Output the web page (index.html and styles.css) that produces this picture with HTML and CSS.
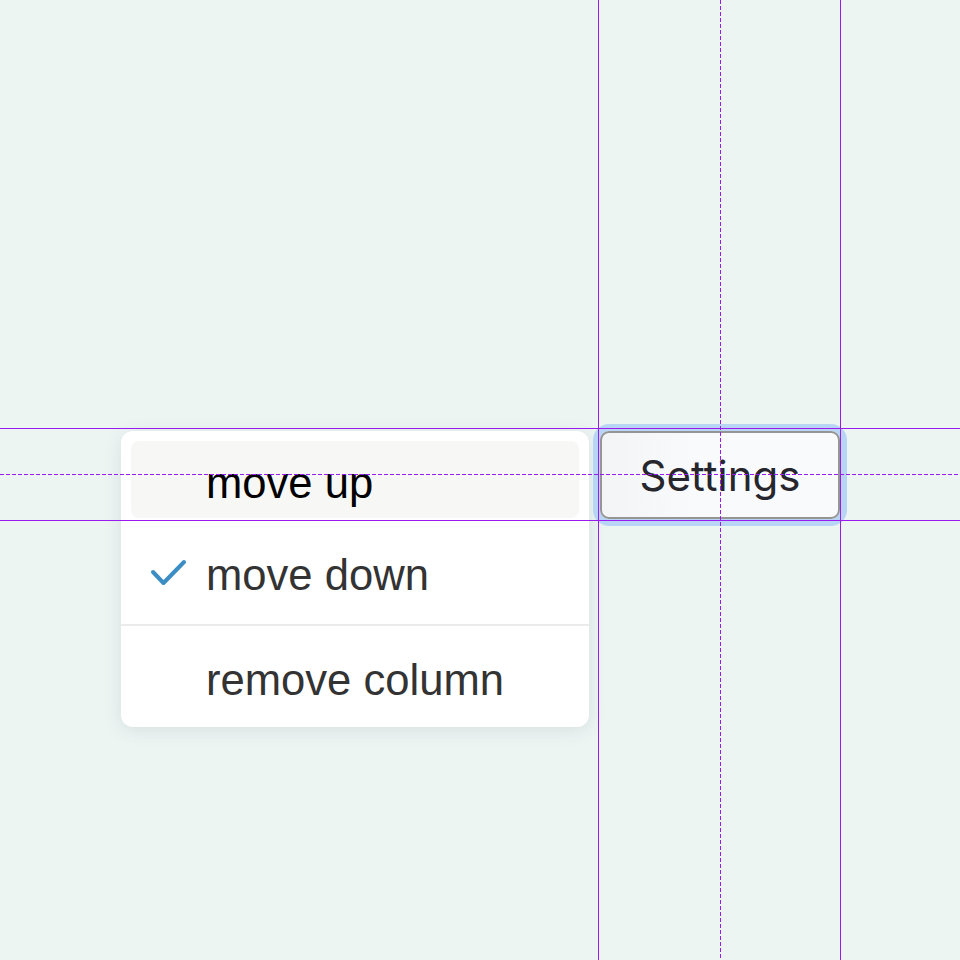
FILE: index.html
```html
<!DOCTYPE html>
<html>
<head>
<meta charset="utf-8">
<link rel="stylesheet" href="styles.css">
</head>
<body>
<div class="stage">
  <div class="menu">
    <div class="item item-hover"><span class="label">move up</span></div>
    <div class="item item-checked">
      <svg class="check" width="40" height="30" viewBox="0 0 40 30"><polyline points="3,13 13.5,24 34,3" fill="none" stroke="#3b8dc4" stroke-width="4" stroke-linecap="round" stroke-linejoin="round"/></svg>
      <span class="label">move down</span>
    </div>
    <div class="sep"></div>
    <div class="item item-last"><span class="label">remove column</span></div>
  </div>
  <button class="btn">Settings</button>
</div>
<div class="guides">
  <div class="h solid" style="top:428px"></div>
  <div class="h dashed" style="top:474px"></div>
  <div class="h solid" style="top:520px"></div>
  <div class="v solid" style="left:598px"></div>
  <div class="v dashed" style="left:720px"></div>
  <div class="v solid" style="left:840px"></div>
</div>
</body>
</html>
```
FILE: styles.css
```css
html, body {
  margin: 0;
  padding: 0;
  background: #edf5f3;
  width: 960px;
  height: 960px;
  overflow: hidden;
}
.stage {
  display: flex;
  align-items: flex-start;
  gap: 11px;
  padding: 431px 0 0 121px;
}
.menu {
  width: 468px;
  background: #ffffff;
  border-radius: 12px;
  box-shadow: 0 3px 18px rgba(40, 70, 70, 0.12);
  padding: 10px 0;
  box-sizing: border-box;
  font-family: "Liberation Sans", Arial, sans-serif;
  font-size: 43.6px;
  line-height: 1;
  color: #333333;
}
.item {
  position: relative;
  padding-left: 85px;
}
.item-hover {
  margin: 0 10px;
  padding-left: 75px;
  padding-top: 21px;
  height: 77px;
  box-sizing: border-box;
  background: #f7f7f5;
  border-radius: 8px;
  color: #000000;
}
.item-checked {
  padding-top: 36px;
  height: 106px;
  box-sizing: border-box;
}
.check {
  position: absolute;
  left: 29px;
  top: 41px;
}
.sep {
  height: 2px;
  background: #ebebeb;
}
.item-last {
  padding-top: 33px;
  height: 91px;
  box-sizing: border-box;
}
.label {
  display: block;
  white-space: nowrap;
}
.btn {
  width: 240px;
  height: 88px;
  box-sizing: border-box;
  border: 2px solid #959595;
  border-radius: 9px;
  background: linear-gradient(90deg, #f2f4f6, #f9fafc 40%, #f9fafc);
  box-shadow: 0 0 0 7px #b9d5f5;
  font-family: Inter, "Liberation Sans", sans-serif;
  font-size: 42px;
  color: #26262c;
  padding: 0;
  margin: 0;
}
.guides {
  position: absolute;
  left: 0;
  top: 0;
  width: 960px;
  height: 960px;
  pointer-events: none;
}
.h {
  position: absolute;
  left: 0;
  width: 960px;
  height: 1px;
}
.v {
  position: absolute;
  top: 0;
  height: 960px;
  width: 1px;
}
.h.solid, .v.solid {
  background: #9a1bf0;
}
.h.dashed {
  background: repeating-linear-gradient(90deg, #9a1bf0 0 4px, transparent 4px 6px);
}
.v.dashed {
  background: repeating-linear-gradient(180deg, #9a1bf0 0 4px, transparent 4px 6px);
}
```
